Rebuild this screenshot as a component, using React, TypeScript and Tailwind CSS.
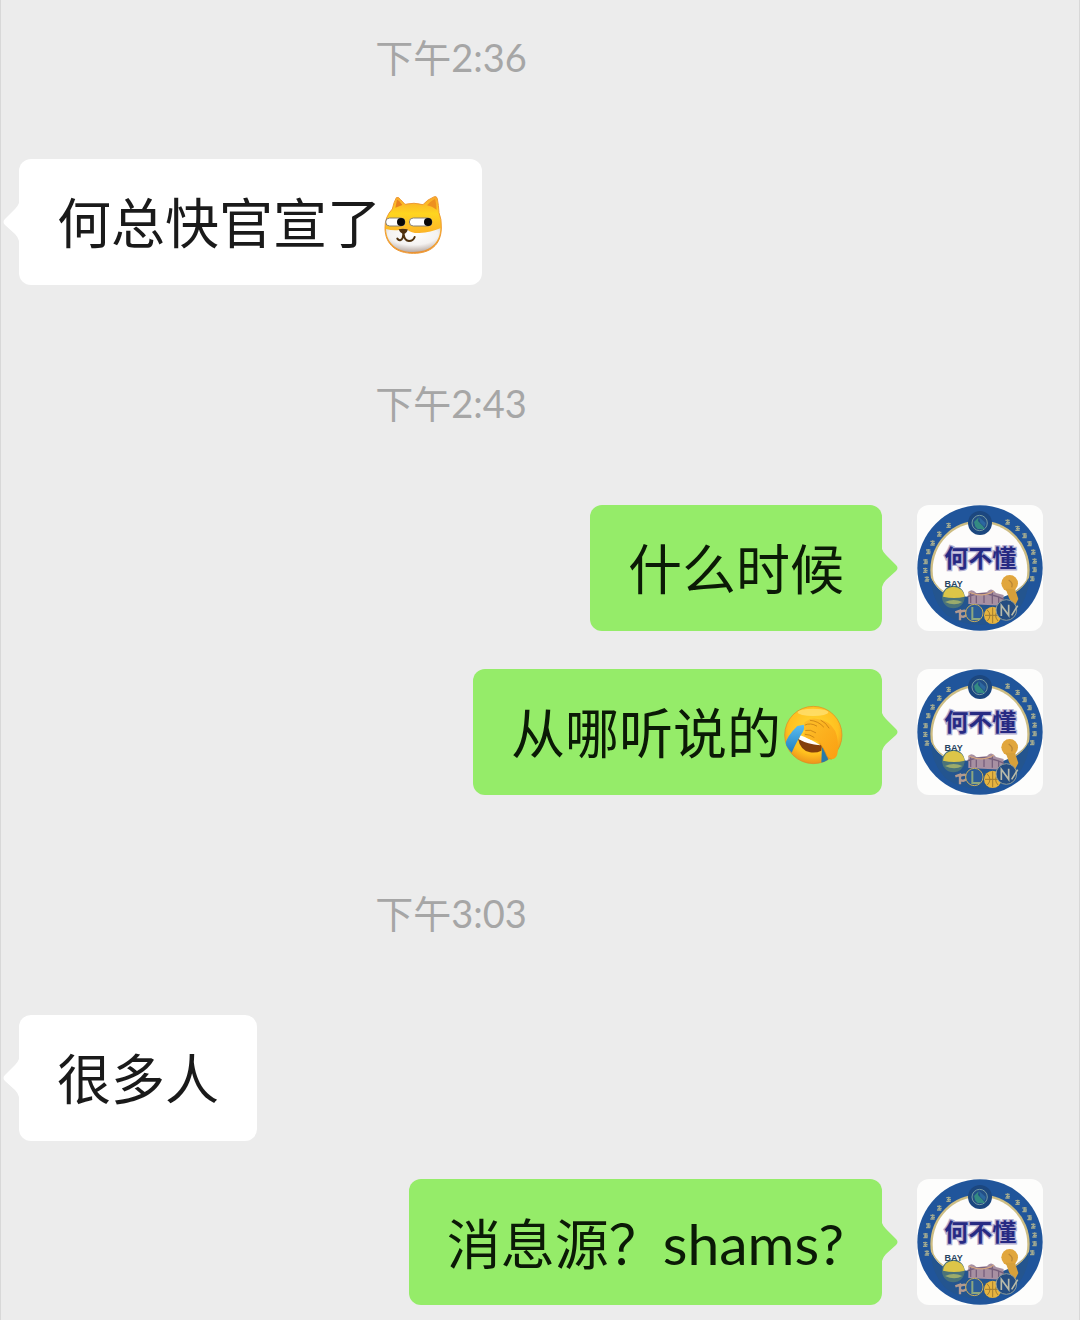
import React from "react";
import clsx from "clsx";

type Emoji = "doge" | "facepalm";

type ChatItem =
  | { kind: "time"; label: string }
  | { kind: "message"; from: "me" | "friend"; text: string; latin?: string; emoji?: Emoji };

const items: ChatItem[] = [
  { kind: "time", label: "下午2:36" },
  { kind: "message", from: "friend", text: "何总快官宣了", emoji: "doge" },
  { kind: "time", label: "下午2:43" },
  { kind: "message", from: "me", text: "什么时候" },
  { kind: "message", from: "me", text: "从哪听说的", emoji: "facepalm" },
  { kind: "time", label: "下午3:03" },
  { kind: "message", from: "friend", text: "很多人" },
  { kind: "message", from: "me", text: "消息源？", latin: "shams?" },
];

function Doge() {
  return (
    <svg viewBox="38 46 180 180" className="w-15 h-15 shrink-0" role="img" aria-label="doge">
      <defs>
        <linearGradient id="doge-fur" x1="0" y1="0" x2="0" y2="1">
          <stop offset="0" stopColor="#f9a72c" />
          <stop offset="0.3" stopColor="#ffd51f" />
          <stop offset="0.6" stopColor="#fdb827" />
          <stop offset="1" stopColor="#e88f35" />
        </linearGradient>
        <radialGradient id="doge-snout" cx="0.5" cy="0.25" r="0.75">
          <stop offset="0" stopColor="#ffffff" />
          <stop offset="0.6" stopColor="#f4f2f1" />
          <stop offset="1" stopColor="#b9aca5" />
        </radialGradient>
      </defs>
      <path
        d="M78 54 Q84 50 91 60 L104 74 Q131 67 158 75 Q170 60 192 51 Q199 49 201 57 Q205 78 206 99 Q214 118 213 145 C212 196 180 221 129 221 C79 221 45 196 44 146 Q43 112 66 88 Q71 66 78 54 Z"
        fill="url(#doge-fur)"
        stroke="#ee9a35"
        strokeWidth="3"
      />
      <path d="M80 60 Q86 61 96 76 L75 84 Z" fill="#e8801f" />
      <path d="M170 77 Q181 64 194 57 Q199 72 199 90 Q185 80 170 77 Z" fill="#ee9020" />
      <path
        d="M47 148 Q68 154 87 151 Q99 144 111 150 Q124 161 147 160 Q182 158 210 146 C209 192 177 217 129 217 C82 217 49 193 47 148 Z"
        fill="url(#doge-snout)"
      />
      <rect x="46" y="115" width="58" height="24" rx="12" fill="#fff" stroke="#8a8274" strokeWidth="3" />
      <rect x="117" y="115" width="68" height="24" rx="12" fill="#fff" stroke="#8a8274" strokeWidth="3" />
      <circle cx="92" cy="127" r="12" fill="#080808" />
      <circle cx="173" cy="127" r="12" fill="#080808" />
      <path d="M85 149 Q98 145 112 149 Q112 158 100 164 Q88 159 85 149 Z" fill="#50320f" />
      <path
        d="M99 160 Q99 178 91 181 Q85 183 81 177 M100 164 Q103 183 116 184 Q129 184 133 172"
        fill="none"
        stroke="#50320f"
        strokeWidth="6"
        strokeLinecap="round"
      />
    </svg>
  );
}

function Facepalm() {
  return (
    <svg viewBox="36 45 180 180" className="w-15 h-15 shrink-0" role="img" aria-label="facepalm">
      <defs>
        <radialGradient id="palm-face" cx="0.5" cy="0.4" r="0.62">
          <stop offset="0" stopColor="#ffd936" />
          <stop offset="0.7" stopColor="#ffc01f" />
          <stop offset="1" stopColor="#ea8f1b" />
        </radialGradient>
        <linearGradient id="palm-hand" x1="0" y1="0" x2="1" y2="1">
          <stop offset="0" stopColor="#fdc02a" />
          <stop offset="1" stopColor="#fb9f11" />
        </linearGradient>
        <linearGradient id="palm-tear" x1="0" y1="0" x2="0" y2="1">
          <stop offset="0" stopColor="#5bbdf0" />
          <stop offset="1" stopColor="#1f7fc0" />
        </linearGradient>
        <clipPath id="palm-clip">
          <circle cx="127" cy="135" r="87" />
        </clipPath>
      </defs>
      <circle cx="127" cy="135" r="86" fill="url(#palm-face)" stroke="#df8a22" strokeWidth="2" />
      <ellipse cx="126" cy="67" rx="46" ry="11" fill="#ffe98a" opacity="0.6" />
      <path d="M81 146 Q107 158 153 166 L151 182 Q136 190 117 187 Q88 181 81 146 Z" fill="#84400b" />
      <path d="M88 136 Q113 144 148 166 Q109 163 84 148 Z" fill="#fff" />
      <g clipPath="url(#palm-clip)">
        <path d="M79 108 L98 104 Q102 114 95 127 Q80 149 62 188 L42 164 Q48 138 79 108 Z" fill="url(#palm-tear)" />
        <path d="M153 170 L168 186 L172 218 L151 218 Z" fill="#287aa8" />
      </g>
      <path
        d="M101 106 Q96 97 107 93 Q119 83 139 87 Q176 91 193 124 Q204 151 200 187 Q198 207 182 208 Q169 207 164 190 Q158 174 145 158 Q137 151 120 149 Q106 144 99 137 Q94 128 103 127 Q96 117 101 106 Z"
        fill="url(#palm-hand)"
      />
      <path
        d="M102 105 Q119 97 137 108 M104 121 Q118 117 134 128 M103 133 Q117 133 129 142 M118 91 Q142 93 158 111 M150 91 Q165 98 174 114"
        fill="none"
        stroke="#b8720f"
        strokeWidth="2"
        strokeLinecap="round"
      />
      <path d="M145 158 Q158 174 164 190 Q169 207 182 208" fill="none" stroke="#e08a14" strokeWidth="2" />
    </svg>
  );
}

// small marks standing around the blue ring of the badge
const ringMarks = [
  [80, 265], [75, 239], [76, 213], [84, 183], [97, 157], [117, 130], [145, 104],
  [322, 94], [352, 113], [373, 135], [388, 159], [399, 184], [403, 211], [403, 237], [396, 264],
];

function Avatar() {
  return (
    <svg viewBox="50 43 378 378" className="w-[126px] h-[126px] shrink-0 rounded-xl bg-[#fdfdfc]" role="img" aria-label="何不懂">
      <circle cx="239" cy="232" r="188" fill="#20559b" />
      <circle cx="239" cy="238" r="149" fill="#cdbd83" />
      <circle cx="239" cy="238" r="142" fill="#fdfcfb" />
      {/* blue foot of the badge */}
      <path d="M92 262 Q110 298 140 312 L204 318 L310 318 Q352 306 386 262 Q384 330 340 372 Q290 402 239 402 Q180 402 138 372 Q94 330 92 262 Z" fill="#24558f" />
      <path d="M98 268 Q114 298 140 308 M340 306 Q364 294 380 268" fill="none" stroke="#cdbd83" strokeWidth="4" />
      {ringMarks.map(([x, y]) => (
        <path key={`${x}-${y}`} d={`M${x - 7} ${y - 5}h13M${x - 5} ${y + 1}h12M${x - 7} ${y + 6}h13M${x} ${y - 8}v15`} stroke="#9fa890" strokeWidth="4" />
      ))}
      <circle cx="239" cy="97" r="36" fill="#1c477f" />
      <circle cx="238" cy="97" r="23" fill="#234f86" stroke="#779ba2" strokeWidth="3" />
      <path d="M221 94 L235 80 L233 91 L247 105 L254 115 L232 115 L225 108 Z" fill="#348a82" />
      <path d="M236 79 L256 97 L253 108 L240 96 Z" fill="#2c67a0" />
      <text
        x="240"
        y="230"
        textAnchor="middle"
        fontSize="72"
        fontWeight="700"
        className="font-['Noto_Sans_CJK_SC',sans-serif]"
        fill="#272a83"
        stroke="#b3aed0"
        strokeWidth="8"
        paintOrder="stroke"
      >
        何不懂
      </text>
      {/* bay badge */}
      <circle cx="159" cy="319" r="34" fill="#4a7379" />
      <path d="M128 318 Q131 290 159 288 Q189 291 193 318 Q162 326 128 318 Z" fill="#dcc548" />
      <path d="M134 334 Q160 322 186 334 Q163 348 134 334 Z" fill="#9aab6c" />
      <text x="160" y="290" textAnchor="middle" fontSize="27" fontWeight="800" className="font-['Liberation_Sans',sans-serif]" fill="#264361">
        BAY
      </text>
      {/* bridge and skyline */}
      <path d="M204 304 Q214 292 229 308 L260 304 Q272 287 287 307 L310 313 L307 345 L204 340 Z" fill="#a890a2" />
      <path d="M201 318 Q252 297 311 326 M211 305 V337 M276 301 V339 M228 315 V338 M251 311 V337 M295 317 V340" fill="none" stroke="#77607d" strokeWidth="4" />
      <path d="M204 304 Q250 323 280 301" fill="none" stroke="#d7a880" strokeWidth="4" />
      {/* trophy */}
      <circle cx="328" cy="278" r="25" fill="#e1a63d" />
      <path d="M316 294 L344 295 L354 325 L341 350 L326 322 Z" fill="#d7a03b" />
      <path d="M325 268 Q340 278 334 290" fill="none" stroke="#b98636" strokeWidth="4" />
      {/* club letters */}
      <path d="M165 365 L179 360 V389 M177 365 Q200 353 199 371 Q193 382 181 376" fill="none" stroke="#b39a8f" strokeWidth="7" />
      <circle cx="222" cy="367" r="26" fill="#2b5d98" stroke="#c8ac5b" strokeWidth="3" />
      <path d="M216 349 V385 H239" fill="none" stroke="#8ca77f" strokeWidth="6" />
      <circle cx="277" cy="374" r="26" fill="#e7b43f" />
      <path d="M254 374 H300 M277 350 V398 M260 357 Q277 374 261 391 M294 357 Q278 374 293 391" fill="none" stroke="#a17d33" strokeWidth="3" />
      <circle cx="318" cy="358" r="31" fill="#254d81" stroke="#8e9c99" strokeWidth="3" />
      <path d="M303 376 V344 L325 374 V342 M334 374 L352 345" fill="none" stroke="#b9bba9" strokeWidth="5" />
    </svg>
  );
}

function Tail({ mine }: { mine: boolean }) {
  return (
    <svg
      viewBox="0 0 16 38"
      aria-hidden="true"
      className={clsx(
        "absolute top-11 w-4 h-[38px]",
        mine ? "left-full text-[#95ec69]" : "right-full -scale-x-100 text-white"
      )}
    >
      <path d="M0 0 Q1 3 4 6 L14 16 Q17 19 14 22 L4 31 Q1 34 0 38 Z" fill="currentColor" />
    </svg>
  );
}

interface MessageProps {
  from: "me" | "friend";
  text: string;
  latin?: string;
  emoji?: Emoji;
}

function Message({ from, text, latin, emoji }: MessageProps) {
  const mine = from === "me";
  return (
    <li className={clsx("flex items-start", mine ? "justify-end gap-[35px] pr-[37px]" : "pl-[19px]")}>
      <div
        className={clsx(
          "relative flex items-center h-[126px] px-[38px] rounded-xl",
          mine ? "bg-[#95ec69] text-[#0b1a06]" : "bg-white text-[#1a1a1a]"
        )}
      >
        <p className="pt-1 text-[54px] leading-[78px] whitespace-nowrap">
          {text}
          {latin && <span className="text-[57px]">{latin}</span>}
        </p>
        {emoji && (
          <span className="pl-0.5 pr-px pt-1.5">{emoji === "doge" ? <Doge /> : <Facepalm />}</span>
        )}
        <Tail mine={mine} />
      </div>
      {mine && <Avatar />}
    </li>
  );
}

export default function App() {
  return (
    <main className="min-h-screen bg-[#ececec] border-x border-[#d8d8d8] font-[Lato,'Noto_Sans_CJK_SC',sans-serif]">
      <ol className="flex flex-col gap-[38px] -mx-px pb-[15px]">
        {items.map((item, i) =>
          item.kind === "time" ? (
            <li key={i} className="pt-[58px] first:pt-[35px] pb-[42px] pr-[178px] text-center text-[38px] leading-[44px] text-[#a6a6a6]">
              <time>{item.label}</time>
            </li>
          ) : (
            <Message key={i} from={item.from} text={item.text} latin={item.latin} emoji={item.emoji} />
          )
        )}
      </ol>
    </main>
  );
}
